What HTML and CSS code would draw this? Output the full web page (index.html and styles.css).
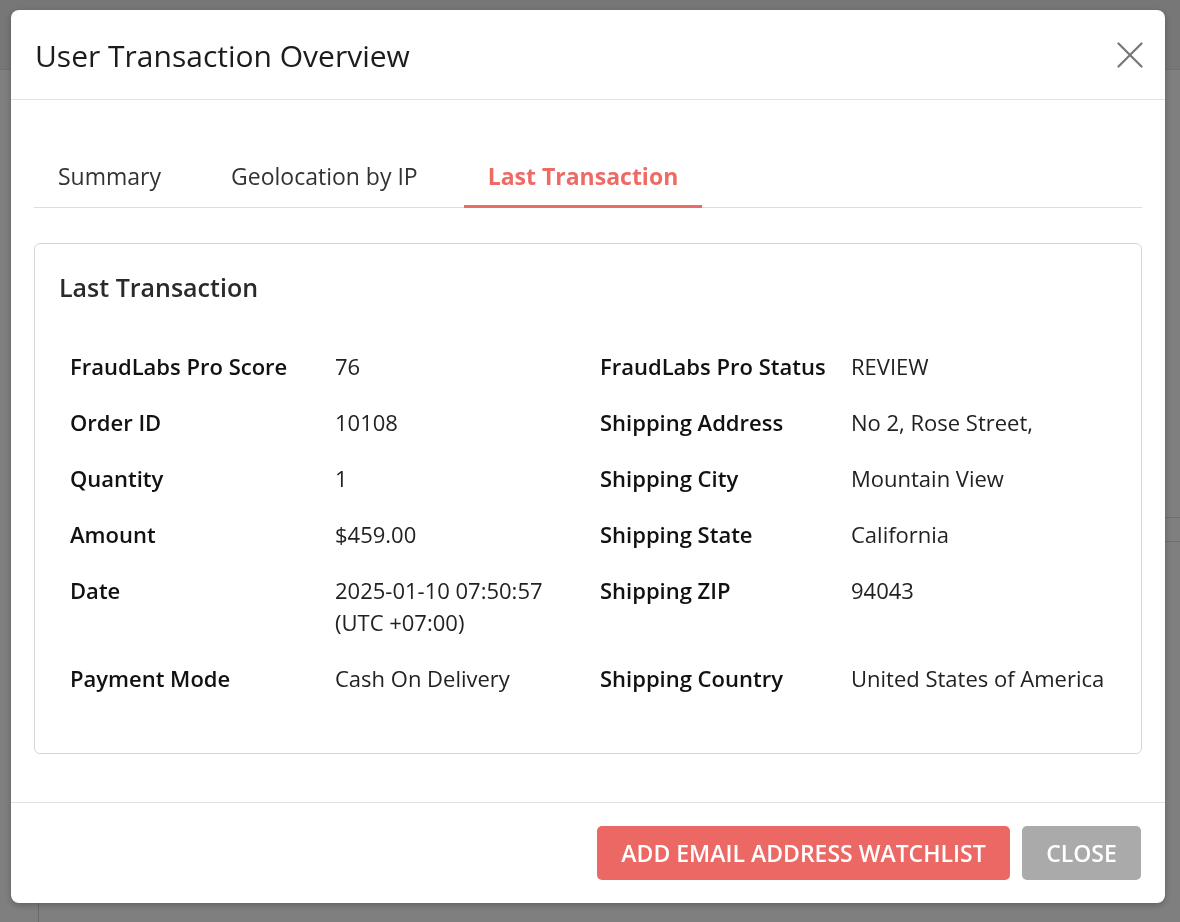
FILE: index.html
```html
<!DOCTYPE html>
<html lang="en">
<head>
<meta charset="utf-8">
<title>User Transaction Overview</title>
<link rel="stylesheet" href="styles.css">
</head>
<body>
<div class="page">
  <div class="page-top"></div>
  <div class="page-rest">
    <div class="page-line-a"></div>
    <div class="page-line-b"></div>
    <div class="page-vline"></div>
  </div>
</div>
<div class="overlay">
  <div class="modal">
    <div class="modal-header">
      <h2 class="modal-title">User Transaction Overview</h2>
      <button class="close-x" aria-label="Close">
        <svg width="26" height="26" viewBox="0 0 26 26"><path d="M1.5 1.5 L24.5 24.5 M24.5 1.5 L1.5 24.5" stroke="#767676" stroke-width="2.2" stroke-linecap="round" fill="none"/></svg>
      </button>
    </div>
    <div class="modal-body">
      <div class="tabs">
        <div class="tab">Summary</div>
        <div class="tab">Geolocation by IP</div>
        <div class="tab active">Last Transaction</div>
      </div>
      <div class="card">
        <h3 class="card-title">Last Transaction</h3>
        <div class="grid">
          <div class="lbl">FraudLabs Pro Score</div><div class="val">76</div>
          <div class="lbl">FraudLabs Pro Status</div><div class="val">REVIEW</div>
          <div class="lbl">Order ID</div><div class="val">10108</div>
          <div class="lbl">Shipping Address</div><div class="val">No 2, Rose Street,</div>
          <div class="lbl">Quantity</div><div class="val">1</div>
          <div class="lbl">Shipping City</div><div class="val">Mountain View</div>
          <div class="lbl">Amount</div><div class="val">$459.00</div>
          <div class="lbl">Shipping State</div><div class="val">California</div>
          <div class="lbl">Date</div><div class="val">2025-01-10 07:50:57<br>(UTC +07:00)</div>
          <div class="lbl">Shipping ZIP</div><div class="val">94043</div>
          <div class="lbl">Payment Mode</div><div class="val">Cash On Delivery</div>
          <div class="lbl">Shipping Country</div><div class="val">United States of America</div>
        </div>
      </div>
    </div>
    <div class="modal-footer">
      <button class="btn btn-primary">ADD EMAIL ADDRESS WATCHLIST</button>
      <button class="btn btn-secondary">CLOSE</button>
    </div>
  </div>
</div>
</body>
</html>
```
FILE: styles.css
```css
* { box-sizing: border-box; }
html, body { margin: 0; padding: 0; }
body {
  width: 1180px;
  height: 922px;
  overflow: hidden;
  font-family: "Open Sans", "Noto Sans", "Liberation Sans", sans-serif;
  background: #7f7f7f;
}
.page { width: 1180px; height: 922px; display: flex; flex-direction: column; }
.page-top { height: 70px; background: #777777; border-bottom: 1px solid #707070; }
.page-rest { flex: 1; position: relative; background: #7f7f7f; }
.page-line-a { position: absolute; left: 1165px; right: 0; top: 447px; height: 1px; background: #6e6e6e; }
.page-line-b { position: absolute; left: 1165px; right: 0; top: 471px; height: 1px; background: #6e6e6e; }
.page-vline { position: absolute; left: 38px; top: 820px; bottom: 0; width: 1px; background: #6a6a6a; }

.overlay {
  position: fixed;
  inset: 0;
  padding: 10px 15px 0 11px;
}
.modal {
  width: 1154px;
  height: 893px;
  background: #fff;
  border-radius: 8px;
  box-shadow: 0 2px 6px rgba(0,0,0,0.25);
  display: flex;
  flex-direction: column;
}
.modal-header {
  height: 90px;
  border-bottom: 1px solid #e1e1e6;
  display: flex;
  align-items: center;
  justify-content: space-between;
  padding: 0 22px 0 24px;
}
.modal-title {
  margin: 0;
  font-size: 30px;
  font-weight: 500;
  color: #1c1c1c;
  letter-spacing: 0;
  padding-top: 2px;
}
.close-x {
  border: 0;
  background: none;
  padding: 0;
  width: 26px;
  height: 26px;
  cursor: pointer;
  display: flex;
}
.modal-body {
  flex: 1;
  padding: 46px 23px 0 23px;
}
.tabs {
  display: flex;
  gap: 22px;
  border-bottom: 1px solid #dedede;
}
.tab {
  padding: 15px 24px 14px;
  font-size: 23px;
  line-height: 30px;
  color: #333;
  border-bottom: 3px solid transparent;
  margin-bottom: -1px;
}
.tab.active {
  color: #ee6a65;
  font-weight: 700;
  border-bottom-color: #ee6a65;
}
.card {
  margin-top: 35px;
  border: 1px solid #d6d6d6;
  border-radius: 6px;
  padding: 23px 24px 47px;
}
.card-title {
  margin: 0;
  font-size: 25px;
  line-height: 40px;
  font-weight: 600;
  color: #2a2a2a;
}
.grid {
  margin-top: 31px;
  display: grid;
  grid-template-columns: 265px 265px 251px 1fr;
  font-size: 22px;
  line-height: 32px;
  color: #222;
}
.lbl, .val { padding: 12px 11px; white-space: nowrap; }
.lbl { font-weight: 600; color: #111; }
.val { color: #222; }
.modal-footer {
  height: 101px;
  border-top: 1px solid #e1e1e6;
  display: flex;
  justify-content: flex-end;
  align-items: flex-start;
  gap: 12px;
  padding: 23px 24px 0 0;
}
.btn {
  height: 54px;
  border: 0;
  border-radius: 5px;
  font-family: "Open Sans", "Noto Sans", sans-serif;
  font-size: 23px;
  font-weight: 600;
  color: #fff;
  padding: 0;
  cursor: pointer;
}
.btn-primary { background: #ec6864; width: 413px; }
.btn-secondary { background: #aaaaaa; width: 119px; }
```
